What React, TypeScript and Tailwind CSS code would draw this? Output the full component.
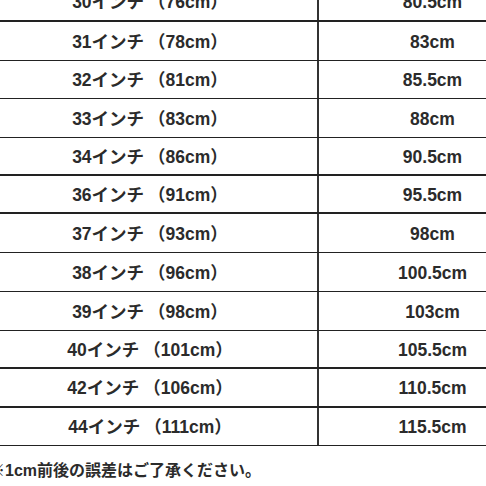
import React from 'react'

const rows = [
  { inch: '30', cm: '76', waist: '80.5cm', h: 'h-[39px]', b: 'border-b-2' },
  { inch: '31', cm: '78', waist: '83cm', h: 'h-[39px]', b: 'border-b' },
  { inch: '32', cm: '81', waist: '85.5cm', h: 'h-[38px]', b: 'border-b' },
  { inch: '33', cm: '83', waist: '88cm', h: 'h-[39px]', b: 'border-b' },
  { inch: '34', cm: '86', waist: '90.5cm', h: 'h-[38px]', b: 'border-b-2' },
  { inch: '36', cm: '91', waist: '95.5cm', h: 'h-[38px]', b: 'border-b-2' },
  { inch: '37', cm: '93', waist: '98cm', h: 'h-[39px]', b: 'border-b' },
  { inch: '38', cm: '96', waist: '100.5cm', h: 'h-[39px]', b: 'border-b' },
  { inch: '39', cm: '98', waist: '103cm', h: 'h-[39px]', b: 'border-b' },
  { inch: '40', cm: '101', waist: '105.5cm', h: 'h-[38px]', b: 'border-b-2' },
  { inch: '42', cm: '106', waist: '110.5cm', h: 'h-[39px]', b: 'border-b-2' },
  { inch: '44', cm: '111', waist: '115.5cm', h: 'h-[38px]', b: 'border-b' },
]

export default function App() {
  return (
    <div className="w-[486px] h-[486px] overflow-hidden bg-white text-[#2b2b2b] font-['Liberation_Sans','Noto_Sans_CJK_JP',sans-serif]">
      {/* size table, top row cut off */}
      <div className="-mt-[17px] flex flex-col">
        {rows.map((row) => (
          <div
            key={row.inch}
            className={`flex ${row.h} ${row.b} border-[#222] box-border`}
          >
            <div className="w-[317px] pr-[17px] pt-[2px] flex items-center justify-center text-[17.5px] font-bold whitespace-nowrap">
              {row.inch}インチ
              <span className="ml-[4px]">（{row.cm}cm）</span>
            </div>
            <div className="flex-1 border-l-2 border-[#333] pl-[60px] pt-[2px] flex items-center justify-center text-[17.5px] font-bold whitespace-nowrap">
              {row.waist}
            </div>
          </div>
        ))}
      </div>

      {/* note */}
      <div className="mt-[17px] -ml-[11px] text-[16px] font-bold whitespace-nowrap leading-none">
        ※1cm前後の誤差はご了承ください。
      </div>
    </div>
  )
}
